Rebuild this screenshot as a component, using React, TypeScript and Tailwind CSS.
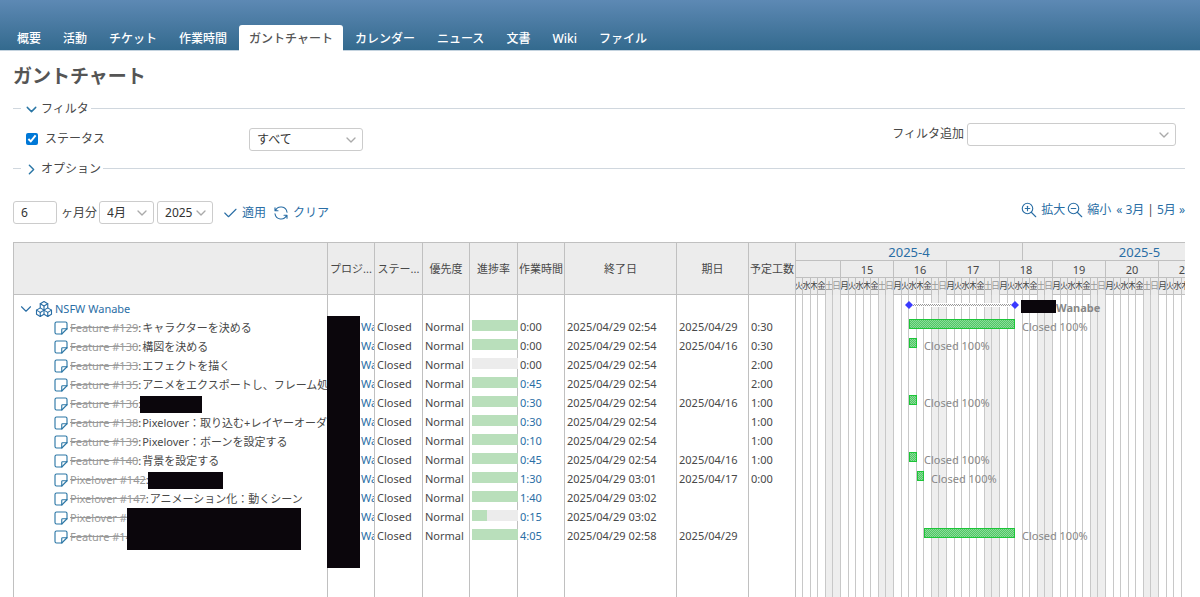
import { ReactNode } from "react";
import {
  TbCheck,
  TbChevronDown,
  TbChevronRight,
  TbNote,
  TbPackages,
  TbRefresh,
  TbZoomIn,
  TbZoomOut,
} from "react-icons/tb";

const tabs = ["概要", "活動", "チケット", "作業時間", "ガントチャート", "カレンダー", "ニュース", "文書", "Wiki", "ファイル"];

type Issue = {
  id: string;
  subject?: string;
  redacted?: string;
  done: number;
  spent: string;
  closed: string;
  due?: string;
  estimate?: string;
  // day offsets from the first day of the chart
  bar?: [number, number];
};

const issues: Issue[] = [
  { id: "Feature #129", subject: "キャラクターを決める", done: 100, spent: "0:00", closed: "2025/04/29 02:54", due: "2025/04/29", estimate: "0:30", bar: [15, 29] },
  { id: "Feature #130", subject: "構図を決める", done: 100, spent: "0:00", closed: "2025/04/29 02:54", due: "2025/04/16", estimate: "0:30", bar: [15, 16] },
  { id: "Feature #133", subject: "エフェクトを描く", done: 0, spent: "0:00", closed: "2025/04/29 02:54", estimate: "2:00" },
  { id: "Feature #135", subject: "アニメをエクスポートし、フレーム処理", done: 100, spent: "0:45", closed: "2025/04/29 02:54", estimate: "2:00" },
  { id: "Feature #136", redacted: "w-[62px]", done: 100, spent: "0:30", closed: "2025/04/29 02:54", due: "2025/04/16", estimate: "1:00", bar: [15, 16] },
  { id: "Feature #138", subject: "Pixelover：取り込む+レイヤーオーダー", done: 100, spent: "0:30", closed: "2025/04/29 02:54", estimate: "1:00" },
  { id: "Feature #139", subject: "Pixelover：ボーンを設定する", done: 100, spent: "0:10", closed: "2025/04/29 02:54", estimate: "1:00" },
  { id: "Feature #140", subject: "背景を設定する", done: 100, spent: "0:45", closed: "2025/04/29 02:54", due: "2025/04/16", estimate: "1:00", bar: [15, 16] },
  { id: "Pixelover #142", redacted: "w-[75px]", done: 100, spent: "1:30", closed: "2025/04/29 03:01", due: "2025/04/17", estimate: "0:00", bar: [16, 17] },
  { id: "Pixelover #147", subject: "アニメーション化：動くシーン", done: 100, spent: "1:40", closed: "2025/04/29 03:02" },
  { id: "Pixelover #", done: 33, spent: "0:15", closed: "2025/04/29 03:02" },
  { id: "Feature #14", done: 100, spent: "4:05", closed: "2025/04/29 02:58", due: "2025/04/29", bar: [17, 29] },
];

const columns = [
  { name: "", width: "w-[314px]" },
  { name: "プロジ...", width: "w-[47px]" },
  { name: "ステー...", width: "w-[48px]" },
  { name: "優先度", width: "w-[47px]" },
  { name: "進捗率", width: "w-[48px]" },
  { name: "作業時間", width: "w-[47px]" },
  { name: "終了日", width: "w-[112px]" },
  { name: "期日", width: "w-[72px]" },
  { name: "予定工数", width: "w-[47px]" },
];

// April 1st 2025 is a Tuesday; weekday 0 is Monday
const weekdays = ["月", "火", "水", "木", "金", "土", "日"];
const dayWidths = [8, 7, 8, 7, 8, 7, 8];
const months = [
  { name: "2025-4", days: 30 },
  { name: "2025-5", days: 31 },
  { name: "2025-6", days: 30 },
  { name: "2025-7", days: 31 },
  { name: "2025-8", days: 31 },
  { name: "2025-9", days: 30 },
];
const days = Array.from({ length: 183 }, (_, i) => (i + 1) % 7);

const dayX = (n: number) => days.slice(0, n).reduce((sum, d) => sum + dayWidths[d], 0);

const monthCells = months.map((m, i) => {
  const start = months.slice(0, i).reduce((sum, x) => sum + x.days, 0);
  return { name: m.name, width: dayX(start + m.days) - dayX(start) };
});

const weekCells = [
  { name: "", width: 45 },
  ...Array.from({ length: 25 }, (_, i) => ({ name: String(15 + i), width: 53 })),
];

function Select({ label, className, children }: { label: string; className: string; children?: ReactNode }) {
  return (
    <span className={`relative inline-flex ${className}`}>
      <select
        aria-label={label}
        className="h-[23px] w-full appearance-none rounded-[3px] border border-[#ccc] bg-white pl-[7px] text-[12px] leading-4 text-[#333]"
      >
        {children}
      </select>
      <TbChevronDown className="pointer-events-none absolute right-1 top-1 h-4 w-4 text-[#aaa]" />
    </span>
  );
}

function Fieldset({ legend, open, children }: { legend: string; open?: boolean; children?: ReactNode }) {
  const Chevron = open ? TbChevronDown : TbChevronRight;
  return (
    <fieldset className="border-t border-[#d0d7de]">
      <legend className="ml-2 px-[2px]">
        <button type="button" className="flex h-[18px] items-center gap-px pt-[2px] leading-4">
          <Chevron className="h-[17px] w-[17px] text-[#2a76a5]" />
          {legend}
        </button>
      </legend>
      {children}
    </fieldset>
  );
}

function IssueRow({ issue }: { issue: Issue }) {
  const cell = "border-r border-[#c0c0c0] p-0 pl-[2px] align-top leading-[18px] overflow-hidden whitespace-nowrap";
  return (
    <tr className="h-[19px]">
      <td className="overflow-hidden border-r border-[#c0c0c0] p-0 whitespace-nowrap">
        <div className="flex h-[19px] items-center pl-[38px]">
          <TbNote strokeWidth={1.5} className="h-[18px] w-[18px] shrink-0 text-[#2a76a5]" />
          <a href="#" className="text-[#999] line-through">{issue.id}</a>
          {(issue.subject || issue.redacted) && <span>:</span>}
          {issue.subject && <span className="ml-px">{issue.subject}</span>}
          {issue.redacted && <span className={`mt-px -ml-px h-[17px] bg-[#0b060c] ${issue.redacted}`} />}
        </div>
      </td>
      <td className="overflow-hidden border-r border-[#c0c0c0] p-0 pl-[33px] align-top leading-[18px] whitespace-nowrap">
        <a href="#" className="text-[#2a6ea5]">Wa</a>
      </td>
      <td className={cell}>Closed</td>
      <td className={cell}>Normal</td>
      <td className="border-r border-[#c0c0c0] p-0 pl-[2px] align-top">
        <div className="mt-[2px] -mr-px h-[11px] bg-[#ececec]">
          <div className="h-full bg-[#b9dfbb]" style={{ width: `${issue.done}%` }} />
        </div>
      </td>
      <td className={cell}>
        {issue.spent === "0:00" ? issue.spent : <a href="#" className="text-[#2a6ea5]">{issue.spent}</a>}
      </td>
      <td className={cell}>{issue.closed}</td>
      <td className={cell}>{issue.due}</td>
      <td className={cell}>{issue.estimate}</td>
    </tr>
  );
}

function IssueTable() {
  return (
    <div className="relative shrink-0">
      <table className="w-[782px] table-fixed border-separate border-spacing-0 border-l border-[#c0c0c0] text-[11px] leading-[19px]">
        <thead>
          <tr className="h-[52px] bg-[#ececec]">
            {columns.map((col) => (
              <th
                key={col.name}
                className={`overflow-hidden border-r border-b border-[#c0c0c0] p-0 text-center font-normal whitespace-nowrap ${col.width}`}
              >
                {col.name}
              </th>
            ))}
          </tr>
        </thead>
        <tbody>
          <tr className="h-[23px]">
            <td className="border-r border-[#c0c0c0] p-0 align-bottom">
              <div className="flex h-[19px] items-center pl-[3px] text-[#2a6ea5]">
                <TbChevronDown strokeWidth={1.5} className="h-[18px] w-[18px]" />
                <TbPackages strokeWidth={1.5} className="mr-[2px] h-[18px] w-[18px]" />
                <a href="#">NSFW Wanabe</a>
              </div>
            </td>
            {columns.slice(1).map((col) => (
              <td key={col.name} className="border-r border-[#c0c0c0] p-0" />
            ))}
          </tr>
          {issues.map((issue, i) => (
            <IssueRow key={i} issue={issue} />
          ))}
          <tr className="h-[51px]">
            {columns.map((col) => (
              <td key={col.name} className="border-r border-[#c0c0c0] p-0" />
            ))}
          </tr>
        </tbody>
      </table>

      {/* Redacted areas */}
      <div className="absolute top-[265px] left-[114px] h-[42px] w-[174px] bg-[#0b060c]" />
      <div className="absolute top-[73px] left-[314px] h-[252px] w-[33px] bg-[#0b060c]" />
    </div>
  );
}

function Diamond() {
  return (
    <svg viewBox="0 0 8 8" className="h-2 w-2 shrink-0 fill-[#3a3aff]">
      <path d="M4 0l4 4-4 4-4-4z" />
    </svg>
  );
}

function Chart() {
  return (
    <div className="relative min-w-0 flex-1 overflow-hidden">
      {/* Day columns behind the bars */}
      <div className="absolute inset-0 flex">
        {days.map((d, i) => (
          <div
            key={i}
            className={`shrink-0 border-r border-[#c8c8c8] ${d > 4 ? "bg-[#eee]" : ""}`}
            style={{ width: dayWidths[d] }}
          />
        ))}
      </div>

      <div className="relative">
        <div className="flex h-[18px] bg-[#ececec] text-[13px] leading-[18px]">
          {monthCells.map((m) => (
            <div key={m.name} className="shrink-0 border-r border-b border-[#c0c0c0] text-center" style={{ width: m.width }}>
              <a href="#" className="text-[#2a6ea5]">{m.name}</a>
            </div>
          ))}
        </div>
        <div className="flex h-[17px] bg-[#ececec] text-[11px] leading-[18px]">
          {weekCells.map((w) => (
            <div key={w.name} className="shrink-0 border-r border-b border-[#c0c0c0] text-center" style={{ width: w.width }}>
              {w.name}
            </div>
          ))}
        </div>
        <div className="flex h-[17px] bg-[#ececec] text-[9px] leading-4">
          {days.map((d, i) => (
            <div
              key={i}
              className={`flex shrink-0 justify-center overflow-hidden border-r border-[#c0c0c0] ${d > 4 ? "text-[#999]" : "border-b"}`}
              style={{ width: dayWidths[d] }}
            >
              {weekdays[d]}
            </div>
          ))}
        </div>

        <div className="pt-1 text-[11px] leading-[18px] text-[#888]">
          <div className="flex h-[19px] items-start" style={{ paddingLeft: dayX(15) - 4 }}>
            <div className="mt-[2px] flex items-center">
              <Diamond />
              <div
                className="h-1 border-y border-white bg-[repeating-conic-gradient(#999_0_25%,#fff_0_50%)] bg-[length:2px_2px]"
                style={{ width: dayX(29) - dayX(15) - 8 }}
              />
              <Diamond />
            </div>
            <span className="mt-px ml-[2px] h-[13px] w-[35px] bg-[#0b060c]" />
            <b>Wanabe</b>
          </div>
          {issues.map((issue, i) => (
            <div key={i} className="flex h-[19px] items-start gap-[7px]" style={{ paddingLeft: dayX(issue.bar?.[0] ?? 0) }}>
              {issue.bar && (
                <>
                  <div
                    className="mt-px h-[10px] shrink-0 border border-[#1cc638] bg-[repeating-conic-gradient(#50c765_0_25%,#8bdc9a_0_50%)] bg-[length:2px_2px]"
                    style={{ width: dayX(issue.bar[1]) - dayX(issue.bar[0]) }}
                  />
                  <span>Closed 100%</span>
                </>
              )}
            </div>
          ))}
        </div>
      </div>
    </div>
  );
}

export default function App() {
  return (
    <div className="min-h-screen bg-white font-['Noto_Sans','Noto_Sans_CJK_JP',sans-serif] text-[12px] leading-4 text-[#484848]">
      <header className="flex h-[51px] items-end border-b border-[#c4d3df] bg-linear-to-b from-[#5d89b4] to-[#336a8e] pl-[7px]">
        <nav className="-mb-px flex gap-[2px]">
          {tabs.map((tab) => (
            <a
              key={tab}
              href="#"
              className={`h-[26px] rounded-t-[3px] px-[10px] pt-[6px] font-medium whitespace-nowrap ${
                tab === "ガントチャート" ? "bg-white text-[#555]" : "text-white"
              }`}
            >
              {tab}
            </a>
          ))}
        </nav>
      </header>

      <main className="pr-[15px] pl-[13px]">
        <h2 className="pt-[11px] pb-[9px] text-[19px] leading-7 font-bold text-[#555]">ガントチャート</h2>

        <Fieldset legend="フィルタ" open>
          <div className="flex items-start justify-between pt-[6px] pr-[9px] pb-2">
            <div className="mt-[5px] flex items-start">
              <label className="flex w-[236px] items-center gap-[7px] pt-[3px] pl-[13px]">
                <input type="checkbox" defaultChecked className="m-0 h-3 w-3 accent-[#0078d7]" />
                ステータス
              </label>
              <Select label="ステータスの条件" className="w-[114px]">
                <option>すべて</option>
              </Select>
            </div>
            <div className="flex items-start gap-[3px]">
              <span className="pt-[3px]">フィルタ追加</span>
              <Select label="フィルタ追加" className="w-[209px]" />
            </div>
          </div>
        </Fieldset>

        <Fieldset legend="オプション" />

        <div className="mt-6 mb-[18px] flex items-start justify-between text-[#2a6ea5]">
          <div className="flex items-center">
            <label className="flex items-center gap-1 text-[#484848]">
              <input
                type="text"
                defaultValue="6"
                className="h-[23px] w-11 rounded-[3px] border border-[#ccc] px-[7px] text-[12px] text-[#333]"
              />
              ヶ月分
            </label>
            <Select label="月" className="ml-[2px] w-[55px]">
              <option>4月</option>
            </Select>
            <Select label="年" className="ml-[3px] w-14">
              <option>2025</option>
            </Select>
            <a href="#" className="ml-2 flex items-center gap-[3px]">
              <TbCheck className="h-[18px] w-[18px]" strokeWidth={1.5} />
              適用
            </a>
            <a href="#" className="ml-[6px] flex items-center gap-[3px]">
              <TbRefresh className="h-[18px] w-[18px]" strokeWidth={1.5} />
              クリア
            </a>
          </div>
          <div className="flex items-center">
            <a href="#" className="flex items-center gap-[3px]">
              <TbZoomIn className="h-[18px] w-[18px]" strokeWidth={1.5} />
              拡大
            </a>
            <a href="#" className="ml-px flex items-center gap-[3px]">
              <TbZoomOut className="h-[18px] w-[18px]" strokeWidth={1.5} />
              縮小
            </a>
            <a href="#" className="ml-[5px]">« 3月</a>
            <span className="mx-[3px] text-[#484848]">|</span>
            <a href="#">5月 »</a>
          </div>
        </div>

        <div className="flex border-t border-[#c0c0c0]">
          <IssueTable />
          <Chart />
        </div>
      </main>
    </div>
  );
}
